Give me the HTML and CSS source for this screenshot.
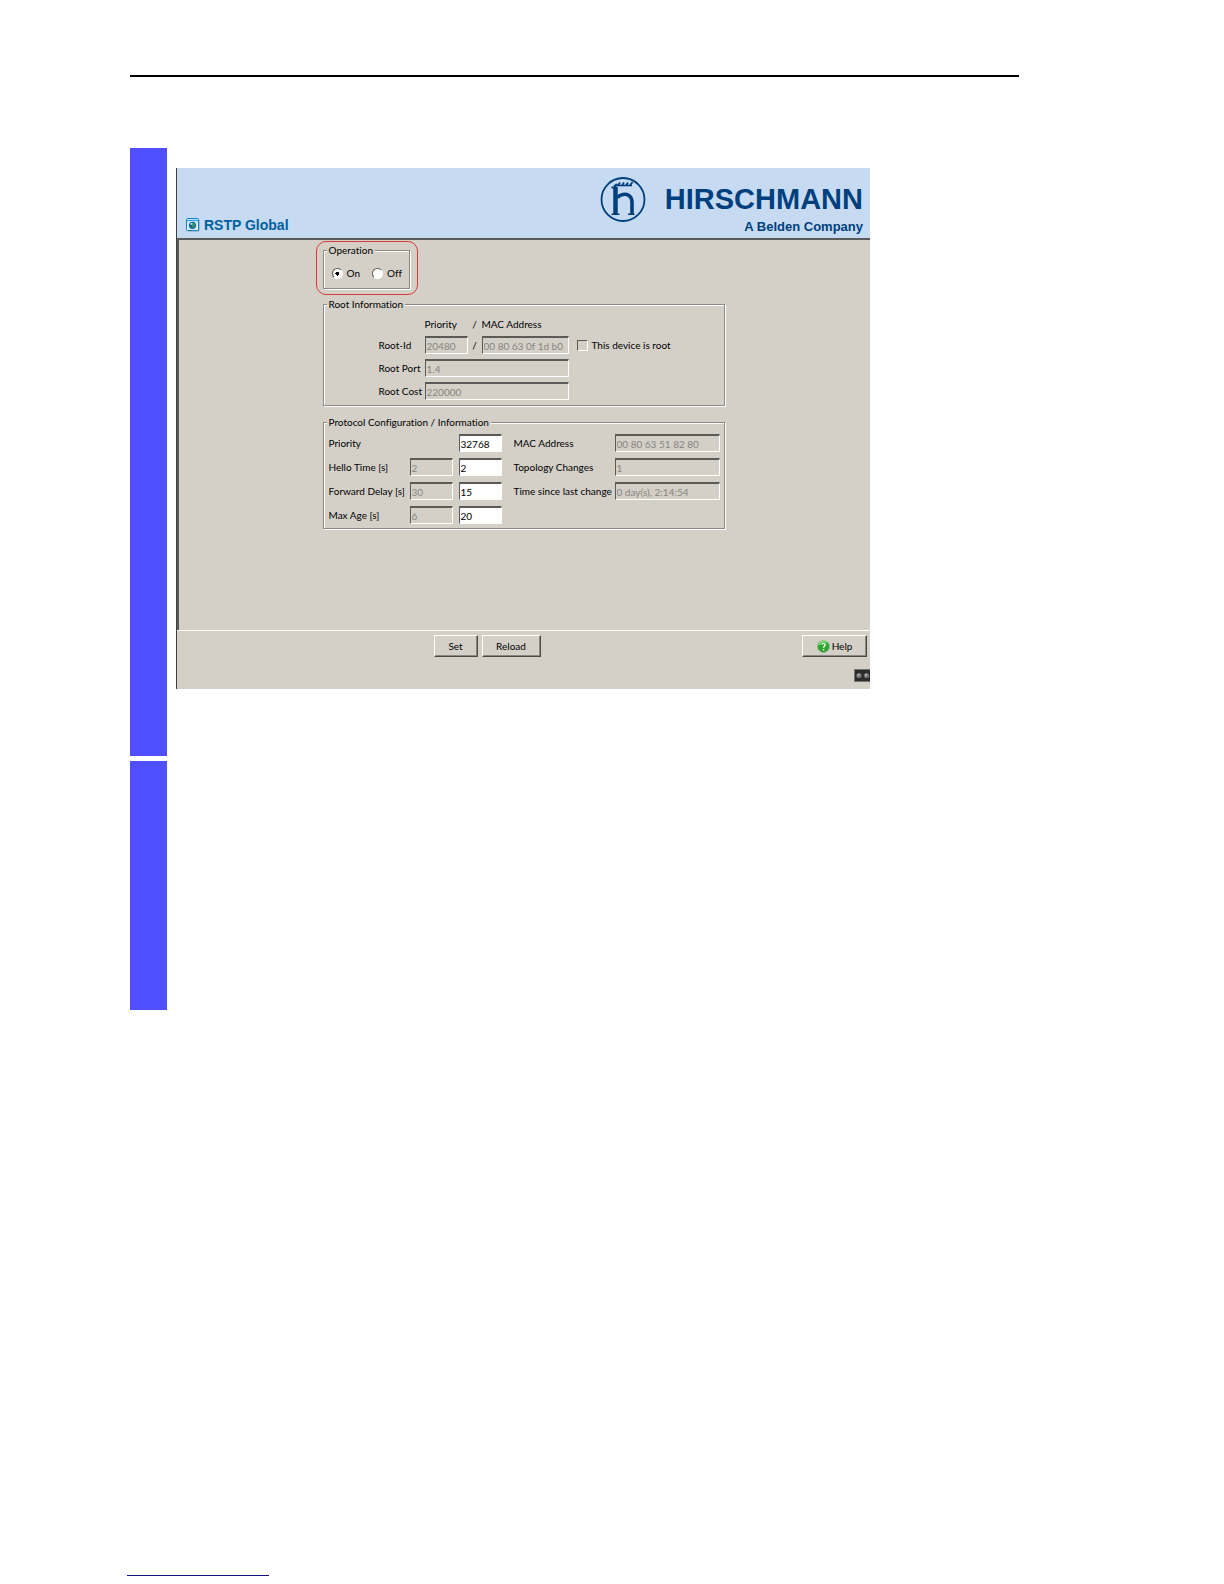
FILE: index.html
```html
<!DOCTYPE html>
<html lang="en">
<head>
  <meta charset="UTF-8" />
  <title>RSTP Global</title>
  <link rel="stylesheet" href="styles.css">
</head>
<body>
  <div class="page">
    <hr class="top-rule">

    <section class="block block-dialog">
      <div class="panel">
        <header class="banner">
          <div class="banner-title">
            <svg class="title-icon" width="14" height="14" viewBox="0 0 14 14">
              <rect x="1.5" y="1.5" width="12" height="12" rx="1" fill="#7f9cb8" />
              <rect x="0.5" y="0.5" width="12" height="12" rx="1" fill="#d9f0fb" stroke="#1583c4" />
              <path d="M1 2.5h11" stroke="#39a9e6" stroke-width="1.5" />
              <circle cx="6.5" cy="7.3" r="3.6" fill="#14659c" />
              <path d="M6 5c2-1 4 1 3 3s-3 2-3 1 1-1 0-2z" fill="#2f9a62" />
              <circle cx="5.4" cy="5.8" r="1.1" fill="#a4dcf5" />
            </svg>
            <h1>RSTP Global</h1>
          </div>
          <div class="brand">
            <svg class="brand-logo" width="46" height="46" viewBox="0 0 46 46" fill="none" stroke="#003f7d">
              <circle cx="23" cy="22.5" r="21.5" stroke-width="1.8" />
              <path d="M15.5 10v27" stroke-width="4.5" />
              <path d="M11.500 37.300h8M28 37.300h6.500" stroke-width="1.600" />
              <path d="M11.500 10.500h5M14 9.500l3-2.500" stroke-width="1.800" />
              <path d="M17.500 20.500c3-3.500 8-4 11-2.200 2.700 1.700 3.500 4.200 3.500 7.200V37" stroke-width="3.600" />
              <path d="M16 8.500h16" stroke-width="1.600" />
              <path d="M18 8.500l2-3M22 8.500l2-3M26 8.500l2-3M30 8.500l2.500-3.500" stroke-width="1.800" />
            </svg>
            <div class="brand-text">
              <div class="brand-name">HIRSCHMANN</div>
              <div class="brand-sub">A Belden Company</div>
            </div>
          </div>
        </header>

        <form class="dialog" id="rstp">
          <div class="groups">
            <div class="highlight">
              <fieldset class="group operation">
                <legend>Operation</legend>
                <div class="radios">
                  <label><input type="radio" name="operation" checked> On</label>
                  <label><input type="radio" name="operation"> Off</label>
                </div>
              </fieldset>
            </div>

            <fieldset class="group root-info">
              <legend>Root Information</legend>
              <div class="root-grid">
                <span class="col-priority">Priority</span>
                <span>/</span>
                <span class="col-mac">MAC Address</span>

                <label class="row-label" for="rootPriority">Root-Id</label>
                <input type="text" id="rootPriority" value="20480" disabled>
                <span>/</span>
                <input type="text" id="rootMac" aria-label="Root MAC Address" value="00 80 63 0f 1d b0" disabled>
                <label class="is-root"><input type="checkbox" disabled> This device is root</label>

                <label class="row-label" for="rootPort">Root Port</label>
                <input type="text" class="wide" id="rootPort" value="1.4" disabled>

                <label class="row-label" for="rootCost">Root Cost</label>
                <input type="text" class="wide" id="rootCost" value="220000" disabled>
              </div>
            </fieldset>

            <fieldset class="group protocol">
              <legend>Protocol Configuration / Information</legend>
              <div class="protocol-grid">
                <label class="name" for="priority">Priority</label>
                <input type="text" class="edit" id="priority" value="32768">
                <label class="info" for="mac">MAC Address</label>
                <input type="text" class="value" id="mac" value="00 80 63 51 82 80" disabled>

                <label class="name" for="hello">Hello Time [s]</label>
                <input type="text" aria-label="Current Hello Time" value="2" disabled>
                <input type="text" class="edit" id="hello" value="2">
                <label class="info" for="topology">Topology Changes</label>
                <input type="text" class="value" id="topology" value="1" disabled>

                <label class="name" for="delay">Forward Delay [s]</label>
                <input type="text" aria-label="Current Forward Delay" value="30" disabled>
                <input type="text" class="edit" id="delay" value="15">
                <label class="info" for="since">Time since last change</label>
                <input type="text" class="value" id="since" value="0 day(s), 2:14:54" disabled>

                <label class="name" for="age">Max Age [s]</label>
                <input type="text" aria-label="Current Max Age" value="6" disabled>
                <input type="text" class="edit" id="age" value="20">
              </div>
            </fieldset>
          </div>
        </form>

        <footer class="actions">
          <div class="buttons">
            <div class="main-buttons">
              <button type="submit" form="rstp" class="btn-set">Set</button>
              <button type="reset" form="rstp" class="btn-reload">Reload</button>
            </div>
            <button type="button" class="btn-help">
              <svg width="13" height="13" viewBox="0 0 13 13">
                <circle cx="6.500" cy="6.500" r="6" fill="#2da52b" stroke="#8fb58a" />
                <path d="M2 5a5 5 0 0 1 8-2.500" fill="none" stroke="#8be07e" stroke-width="1.500" />
                <path d="M4.800 4.800c.2-2 3.700-1.700 3.400.2-.2 1.200-1.700 1.300-1.700 2.800M6.500 9v1.300" fill="none" stroke="#fff" stroke-width="1.300" />
              </svg>
              Help
            </button>
          </div>
          <svg class="leds" width="16" height="13" viewBox="0 0 16 13">
            <rect width="16" height="13" fill="#77756f" />
            <rect x="1" y="1" width="15" height="11" fill="#2c2c2c" />
            <circle cx="5" cy="6.500" r="2.600" fill="#777" />
            <circle cx="12.500" cy="6.500" r="2.600" fill="#777" />
            <circle cx="4.500" cy="6" r="1" fill="#bbb" />
            <circle cx="12" cy="6" r="1" fill="#bbb" />
          </svg>
        </footer>
      </div>
    </section>

    <section class="block block-text"></section>

    <hr class="bottom-rule">
  </div>
</body>
</html>
```

FILE: styles.css
```css
* {
  box-sizing: border-box;
}

body {
  margin: 0;
  background: #fff;
  color: #000;
  font-family: Lato, "Liberation Sans", sans-serif;
  font-size: 10px;
  font-variant-ligatures: none;
  line-height: 12px;
}

.page {
  display: flex;
  flex-direction: column;
  min-height: 100vh;
  padding: 75px 205px 8px 130px;
}

hr {
  margin: 0;
  border: none;
}

.top-rule {
  height: 2px;
  margin-bottom: 71px;
  background: #000;
}

.bottom-rule {
  width: 142px;
  height: 1px;
  margin: auto 0 0 -3px;
  background: #12127a;
}

/* blue bar on the left of each block */
.block {
  border-left: 37px solid #4f4fff;
  padding: 20px 0 0 9px;
}

.block-dialog {
  min-height: 608px;
  margin-bottom: 5px;
}

.block-text {
  min-height: 249px;
}

.panel {
  max-width: 694px;
  border-left: 1px solid #404040;
  background: #d4d0c8;
}

/* banner */
.banner {
  display: flex;
  justify-content: space-between;
  align-items: flex-end;
  height: 70px;
  padding: 0 7px 0 9px;
  background: #c6dbf2;
}

.banner-title {
  display: flex;
  align-items: center;
  gap: 4px;
  padding-bottom: 5px;
}

.banner h1 {
  margin: 0;
  color: #00619e;
  font: bold 14px/16px "Liberation Sans", Arial, sans-serif;
}

.brand {
  display: flex;
  align-items: flex-start;
  gap: 19px;
  height: 61px;
  color: #003f7d;
  font-family: "Liberation Sans", Arial, sans-serif;
  font-weight: bold;
  text-align: right;
}

.brand-text {
  padding-top: 6px;
}

.brand-name {
  font-size: 29px;
  line-height: 32px;
}

.brand-sub {
  padding-top: 5px;
  font-size: 13px;
  line-height: 14px;
}

/* dialog body */
.dialog {
  min-height: 392px;
  padding: 1px 2px 0 0;
  border-top: 2px solid #5a5a5a;
  border-left: 2px solid #5a5a5a;
}

.groups {
  width: 402px;
  margin: 0 auto;
}

/* red frame, wider than the groups below it */
.highlight {
  width: 102px;
  height: 54px;
  margin: 0 0 3px -7px;
  padding: 2px 6px 0;
  border: 1px solid #d83a3a;
  border-radius: 10px;
}

.group {
  min-width: 0;
  margin: 0;
  padding: 0;
  border: 1px solid #8c8984;
  box-shadow: 1px 1px 0 #fff, inset 1px 1px 0 #fff;
}

legend {
  margin-left: 3px;
  padding: 0 2px;
  background: #d4d0c8;
}

.operation {
  width: 87px;
  height: 45px;
}

.radios {
  display: flex;
  gap: 12px;
  padding: 11px 0 0 8px;
}

.radios label,
.is-root {
  display: flex;
  align-items: center;
  gap: 4px;
}

.root-info {
  margin-bottom: 10px;
}

.root-grid {
  display: grid;
  grid-template-columns: 46px 43px 14px 87px 1fr;
  grid-auto-rows: 18px;
  grid-template-rows: 14px;
  row-gap: 5px;
  align-items: center;
  padding: 7px 4px 5px 55px;
}

.root-grid span {
  text-align: center;
}

.root-grid .col-priority {
  grid-column: 2;
  text-align: left;
}

.root-grid .col-mac {
  grid-column: 4 / 6;
  text-align: left;
}

.row-label {
  grid-column: 1;
}

.root-grid .wide {
  grid-column: 2 / 5;
}

.is-root {
  padding-left: 8px;
}

.protocol-grid {
  display: grid;
  grid-template-columns: 81px 43px 6px 43px 12px 101px 1fr;
  grid-auto-rows: 18px;
  row-gap: 6px;
  align-items: center;
  padding: 6px 4px 4px 5px;
}

.name {
  grid-column: 1;
}

.edit {
  grid-column: 4;
}

.info {
  grid-column: 6;
  white-space: nowrap;
}

.value {
  grid-column: 7;
}

/* controls */
input {
  margin: 0;
  border: 1px solid;
  border-color: #5c5a56 #fff #fff #5c5a56;
  background: #fff;
}

input[type="text"] {
  width: 100%;
  height: 18px;
  padding: 0 1px;
  border-top-width: 2px;
  border-radius: 0;
  color: #000;
  font: inherit;
}

input[type="text"]:disabled {
  background: #d4d0c8;
  color: #87857f;
}

input[type="radio"],
input[type="checkbox"] {
  flex: none;
  appearance: none;
  width: 11px;
  height: 11px;
}

input[type="radio"] {
  border-radius: 50%;
}

input[type="radio"]:checked {
  background: radial-gradient(circle, #000 0 2px, #fff 2px);
}

input[type="checkbox"] {
  background: #d4d0c8;
}

button {
  height: 22px;
  padding: 0;
  border: 1px solid;
  border-color: #fff #4a4a46 #4a4a46 #fff;
  box-shadow: inset -1px -1px 0 #8c8984;
  background: #d4d0c8;
  color: #000;
  font: inherit;
}

/* footer */
.actions {
  display: flex;
  flex-direction: column;
  padding: 4px 0 7px;
  border-top: 1px solid #fff;
}

.buttons {
  display: flex;
  padding-right: 3px;
}

.main-buttons {
  display: flex;
  flex: 1;
  justify-content: center;
  gap: 4px;
  padding-right: 5px;
}

.btn-set {
  width: 44px;
}

.btn-reload {
  width: 59px;
}

.btn-help {
  display: flex;
  align-items: center;
  justify-content: center;
  gap: 2px;
  width: 65px;
}

.leds {
  align-self: flex-end;
  margin-top: 12px;
}
```
